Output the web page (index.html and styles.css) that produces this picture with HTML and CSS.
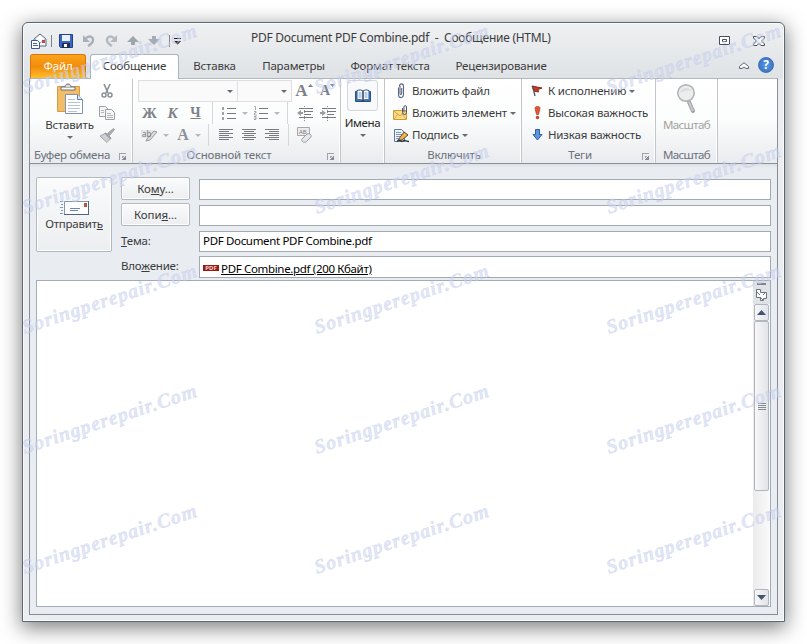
FILE: index.html
```html
<!DOCTYPE html>
<html lang="ru">
<head>
    <meta charset="UTF-8">
    <title>PDF Document PDF Combine.pdf - Сообщение (HTML)</title>
    <link rel="stylesheet" href="styles.css">
</head>
<body>
    <div class="window">
        <div class="titlebar">
            <div class="quick">
                <svg width="16" height="16" viewBox="0 0 16 16"><path d="M3 6l6-5 6 5v7H3z" fill="#fff" stroke="#52617c"/><path d="M4 6l5 4 6-4" fill="none" stroke="#9aa7bd"/><path d="M11 7h3v3h-3z" fill="#c4473a"/><path d="M.5 7.500h6l2 2v6h-8z" fill="#fff" stroke="#42578a"/><path d="M2 10.500h4M2 12.500h5" stroke="#3a65ae"/></svg>
                <i class="bar"></i>
                <svg width="16" height="16" viewBox="0 0 16 16"><path d="M1.500 1.500h13v13h-12l-1-1z" fill="#3c66c4" stroke="#25408d"/><path d="M4 2h8v6H4z" fill="#e8f1fb"/><path d="M4 10h8v5H4z" fill="#1f2e55"/><path d="M6 11h3v3H6z" fill="#fff"/></svg>
                <svg width="14" height="14" viewBox="0 0 14 14"><path d="M4 4c4-3 7-1 7 2s-2 4-5 6" fill="none" stroke="#a9afb6" stroke-width="2.400"/><path d="M1 1v7h7z" fill="#a9afb6"/></svg>
                <svg width="14" height="14" viewBox="0 0 14 14"><path d="M10 4C6 1 3 3 3 6s2 4 5 6" fill="none" stroke="#b4b9bf" stroke-width="2.400"/><path d="M13 1v7H6z" fill="#b4b9bf"/></svg>
                <svg width="12" height="10" viewBox="0 0 12 10"><path d="M6 0l6 6H8v3H4V6H0z" fill="#9fa5ac"/></svg>
                <svg width="12" height="10" viewBox="0 0 12 10"><path d="M6 9l6-6H8V0H4v3H0z" fill="#a6acb3"/></svg>
                <i class="bar"></i>
                <svg class="more" width="7" height="7" viewBox="0 0 7 7"><path d="M0 0h7v1H0zM0 3h7L3.500 6.500z" fill="#111"/></svg>
            </div>
            <div class="title">PDF Document PDF Combine.pdf&nbsp; -&nbsp; Сообщение (HTML)</div>
            <div class="controls">
                <svg width="11" height="9" viewBox="0 0 11 9"><path d="M.5.5h10v8H.5z" fill="#fff" stroke="#454e5a"/><path d="M3.500 3.500h4v2h-4z" fill="none" stroke="#454e5a"/></svg>
                <svg width="12" height="10" viewBox="0 0 12 10"><path d="M.5.500h3.500L6 2.700 8 .5h3.500v1.500L8.500 5l3 3v1.500H8L6 7.300 4 9.500H.5V8l3-3-3-3z" fill="#fff" stroke="#454e5a"/></svg>
            </div>
        </div>
        <div class="tabs">
            <div class="tab file">Файл</div>
            <div class="tab active">Сообщение</div>
            <div class="tab insert">Вставка</div>
            <div class="tab options">Параметры</div>
            <div class="tab format">Формат текста</div>
            <div class="tab review">Рецензирование</div>
            <svg class="collapse" width="10" height="8" viewBox="0 0 10 8"><path d="M.500 4.500L5 .7l4.500 3.800v2H7L5 5 3 6.500H.5z" fill="#fff" stroke="#59626d"/></svg>
            <div class="help">?</div>
        </div>
        <div class="ribbon">
            <div class="group clipboard">
                <div class="group-body">
                    <div class="big">
                        <svg width="28" height="32" viewBox="0 0 28 32"><path d="M1.500 3.500h22v25h-22z" fill="#f2bd67" stroke="#d89a43"/><path d="M5 4h14v3H5z" fill="#fff" stroke="#6b7077"/><path d="M9 4c0-4 6-4 6 0" fill="#ddd" stroke="#6b7077"/><path d="M9.500 11.500h12l5 5v14h-17z" fill="#fff" stroke="#7c93b3"/><path d="M21.500 11.500v5h5" fill="#d7e4f4" stroke="#5b7fb0"/><path d="M12 16.500h7M12 19.500h12M12 22.500h12M12 25.500h12M12 28.500h9" stroke="#b6c2d2"/></svg>
                        <span>Вставить</span>
                        <i class="arrow"></i>
                    </div>
                    <div class="stack">
                        <div class="line"><svg width="12" height="14" viewBox="0 0 12 14"><path d="M3 0l4 9M9 0L5 9" stroke="#8b9097" stroke-width="1.600"/><circle cx="3" cy="11" r="2" fill="none" stroke="#8b9097" stroke-width="1.500"/><circle cx="9" cy="11" r="2" fill="none" stroke="#8b9097" stroke-width="1.500"/></svg></div>
                        <div class="line"><svg width="16" height="14" viewBox="0 0 16 14"><path d="M.5.500h6l3 3v7h-9z" fill="#f5f5f5" stroke="#9da1a6"/><path d="M6.500 3.500h6l3 3v7h-9z" fill="#f5f5f5" stroke="#9da1a6"/><path d="M2 4.500h3M2 6.500h3M8 7.500h4M8 9.500h6M8 11.500h6" stroke="#b3b6ba"/></svg></div>
                        <div class="line"><svg width="16" height="15" viewBox="0 0 16 15"><path d="M14.500.5l1 1-5 6-2-2z" fill="#aaa" stroke="#a0a3a7"/><path d="M1 8l6-3 5 5-4 4.500z" fill="#cdcfd2" stroke="#a4a7ab"/><path d="M6 5l6 6" stroke="#9a9ea3" stroke-width="1.500"/></svg></div>
                    </div>
                </div>
                <div class="group-title">Буфер обмена <i class="launcher"></i></div>
            </div>
            <div class="group font">
                <div class="group-body">
                    <div class="line">
                        <div class="combo family"><i class="arrow"></i></div>
                        <div class="combo size"><i class="arrow"></i></div>
                        <div class="tool grow">А<svg width="5" height="3" viewBox="0 0 5 3"><path d="M0 3L2.500 0 5 3z" fill="#7d8187"/></svg></div>
                        <div class="tool shrink">А<svg width="5" height="3" viewBox="0 0 5 3"><path d="M0 0l2.500 3L5 0z" fill="#7d8187"/></svg></div>
                    </div>
                    <div class="line">
                        <div class="tool bold">Ж</div>
                        <div class="tool italic">К</div>
                        <div class="tool under">Ч</div>
                        <i class="sep"></i>
                        <div class="tool"><svg width="14" height="13" viewBox="0 0 14 13"><path d="M5 1.500h9M5 6.500h9M5 11.500h9" stroke="#777b80"/><path d="M0 0h2v3H0zM0 5h2v3H0zM0 10h2v3H0z" fill="#a0a3a8"/></svg></div>
                        <i class="drop"></i>
                        <div class="tool"><svg width="14" height="14" viewBox="0 0 14 14"><path d="M5 2.500h9M5 7.500h9M5 12.500h9" stroke="#777b80"/><path d="M0 .5h1.500V4M0 5.500h2v1.500H.500V9H3M0 10.500h2v3H0M0 12h2" fill="none" stroke="#94989d" stroke-width=".8"/></svg></div>
                        <i class="drop"></i>
                        <i class="sep wide"></i>
                        <div class="tool"><svg width="16" height="15" viewBox="0 0 16 15"><path d="M2 2.500h14M7 5.500h9M7 8.500h7M2 11.500h14" stroke="#777b80"/><path d="M7.500 0v15" stroke="#8c9095" stroke-dasharray="1 1"/><path d="M0 7l4-3v2h2v2H4v2z" fill="#999da3"/></svg></div>
                        <div class="tool"><svg width="16" height="15" viewBox="0 0 16 15"><path d="M2 2.500h14M7 5.500h9M7 8.500h7M2 11.500h14" stroke="#777b80"/><path d="M7.500 0v15" stroke="#8c9095" stroke-dasharray="1 1"/><path d="M6 7L2 4v2H0v2h2v2z" fill="#999da3"/></svg></div>
                    </div>
                    <div class="line">
                        <div class="tool"><svg width="17" height="13" viewBox="0 0 17 13"><path d="M0 1h12v8H0z" fill="#e4e5e7"/><path d="M6 10l7-8 3 1-7 8-4 1z" fill="#ddd" stroke="#999"/><text x="1" y="8" class="ab">ab</text></svg></div>
                        <i class="drop"></i>
                        <div class="tool color">А</div>
                        <i class="drop"></i>
                        <i class="sep wide"></i>
                        <div class="tool"><svg width="14" height="12" viewBox="0 0 14 12"><path d="M0 .5h14M0 2.500h10M0 4.500h14M0 6.500h10M0 8.500h14M0 10.500h10" stroke="#777b80"/></svg></div>
                        <div class="tool"><svg width="14" height="12" viewBox="0 0 14 12"><path d="M0 .5h14M2 2.500h10M0 4.500h14M2 6.500h10M0 8.500h14M2 10.500h10" stroke="#777b80"/></svg></div>
                        <div class="tool"><svg width="14" height="12" viewBox="0 0 14 12"><path d="M0 .5h14M4 2.500h10M0 4.500h14M4 6.500h10M0 8.500h14M4 10.500h10" stroke="#777b80"/></svg></div>
                        <i class="sep"></i>
                        <div class="tool"><svg width="16" height="16" viewBox="0 0 16 16"><path d="M.5.5h12v8H.5z" fill="#ececed" stroke="#a5a8ac"/><text x="2" y="7" class="ab small">AB</text><path d="M5 12l5-5c3-1 5 1 4 3l-5 5c-3 1-5-1-4-3z" fill="#e6e7e9" stroke="#9a9ea4"/></svg></div>
                    </div>
                </div>
                <div class="group-title">Основной текст <i class="launcher"></i></div>
            </div>
            <div class="group names">
                <div class="group-body">
                    <div class="big">
                        <div class="book"><svg width="16" height="14" viewBox="0 0 16 14"><path d="M.5 2.500h15v10H.5z" fill="#3f7fc4" stroke="#29527f"/><path d="M2 1.500c3-1 5-.5 6 .5 1-1 3-1.500 6-.5v9.500c-3-.8-5-.3-6 .7-1-1-3-1.500-6-.7z" fill="#fff" stroke="#33558a"/><path d="M8 2v10" stroke="#1d2f55" stroke-width="1.400"/><path d="M3.500 4h3M3.500 6h3M3.500 8h3M9.500 4h3M9.500 6h3M9.500 8h3" stroke="#6b9bd2"/></svg></div>
                        <span>Имена</span>
                        <i class="arrow"></i>
                    </div>
                </div>
            </div>
            <div class="group include">
                <div class="group-body">
                    <div class="line"><svg width="16" height="16" viewBox="0 0 16 16"><path d="M5.500 4.500v7a2 2.500 0 0 0 5 0v-8a1.500 2 0 0 0-4 0M7 3v7.500a.8.8 0 0 0 1.700 0V5" fill="none" stroke="#5c6880" stroke-width="1.100"/></svg><span>Вложить файл</span></div>
                    <div class="line"><svg width="16" height="16" viewBox="0 0 16 16"><path d="M.5 5.500h13v9H.5z" fill="#fbdc86" stroke="#d39a33"/><path d="M1 6l6 5 6-5M1 14l4-5M13 14L9 9" fill="none" stroke="#d9a544"/><path d="M9.500 3v4.500a2 2 0 0 0 4 0V2a1.300 1.300 0 0 0-2.600 0v5" fill="none" stroke="#4f5b73"/></svg><span>Вложить элемент</span><i class="arrow"></i></div>
                    <div class="line"><svg width="16" height="16" viewBox="0 0 16 16"><path d="M1.500 2.500h7l3 3v9h-10z" fill="#edf3fb" stroke="#66799b"/><path d="M3 5.500h5M3 7.500h6M3 9.500h4M3 11.500h3" stroke="#8296b8"/><path d="M5 13l6-8 4 3-6 5z" fill="#f0b44f" stroke="#5c4a32"/><path d="M4 14.500c3-3 4 1 6-.5s3 .5 6 .5" fill="none" stroke="#283244" stroke-width="1.300"/></svg><span>Подпись</span><i class="arrow"></i></div>
                </div>
                <div class="group-title">Включить</div>
            </div>
            <div class="group tags">
                <div class="group-body">
                    <div class="line"><svg width="12" height="14" viewBox="0 0 12 14"><path d="M1 2l10 2-4 1.500L7.500 8 3 7z" fill="#c63a26" stroke="#8d281c"/><path d="M1.500 2L4 12" stroke="#54545a" stroke-width="1.300"/></svg><span>К исполнению</span><i class="arrow"></i></div>
                    <div class="line"><svg width="12" height="14" viewBox="0 0 12 14"><path d="M4 2.500c0-3 5-3 5 0L7.500 8.500h-2z" fill="#e25635" stroke="#b23b22" stroke-width=".7"/><circle cx="6.500" cy="11.500" r="1.700" fill="#cc4226"/></svg><span>Высокая важность</span></div>
                    <div class="line"><svg width="12" height="14" viewBox="0 0 12 14"><path d="M4.500 1.500h4v5h2.500L6.500 12 2 6.500h2.500z" fill="#5b95dd" stroke="#2e5fa6"/></svg><span>Низкая важность</span></div>
                </div>
                <div class="group-title">Теги <i class="launcher"></i></div>
            </div>
            <div class="group zoom">
                <div class="group-body">
                    <div class="big disabled">
                        <svg width="22" height="32" viewBox="0 0 22 32"><path d="M13 19l4 9" stroke="#9c9ea1" stroke-width="4" stroke-linecap="round"/><path d="M13 19l4 9" stroke="#c9cacc" stroke-width="2"/><circle cx="10" cy="10" r="8.200" fill="#eceded" stroke="#b5b7ba" stroke-width="1.700"/><path d="M4 10c1-5 8-7 12-2-4-1-8 0-12 2z" fill="#dcdddf"/></svg>
                        <span>Масштаб</span>
                    </div>
                </div>
                <div class="group-title">Масштаб</div>
            </div>
        </div>
        <div class="compose">
            <div class="header">
                <button class="btn send">
                    <svg width="30" height="16" viewBox="0 0 30 16"><path d="M5.500 1.500h24v13h-24z" fill="#fdfdfe" stroke="#8796ad"/><path d="M5 14.500h25M29.500 1v14" stroke="#4d6482"/><path d="M25 3h3v4h-3z" fill="#b5533f"/><path d="M11 8.500h10M11 10.500h8" stroke="#6b88b5"/><path d="M1 1.500h3M2 4.500h2M1 7.500h3M2 10.500h2M1 13.500h3" stroke="#7f97bb"/></svg>
                    <span>Отправит<u>ь</u></span>
                </button>
                <div class="fields">
                    <button class="btn">Ко<u>м</u>у...</button>
                    <div class="field"></div>
                    <button class="btn">Копи<u>я</u>...</button>
                    <div class="field"></div>
                    <label><u>Т</u>ема:</label>
                    <div class="field">PDF Document PDF Combine.pdf</div>
                    <label class="attach-label">Вло<u>ж</u>ение:</label>
                    <div class="field attach"><b class="pdf">PDF</b><u>PDF Combine.pdf (200 Кбайт)</u></div>
                </div>
            </div>
            <div class="message">
                <div class="scrollbar">
                    <i class="split"></i>
                    <svg width="13" height="12" viewBox="0 0 13 12"><path d="M1.500.5h4v3h6v6h-3v2h-3v-3h-4z" fill="#fff" stroke="#6c737c"/><path d="M2 3l3 3M8 6l3-3M5 8l3 3" stroke="#6c737c"/></svg>
                    <div class="sbtn up"><svg width="9" height="5" viewBox="0 0 9 5"><path d="M0 5L4.500 0 9 5z" fill="#44546f"/></svg></div>
                    <div class="thumb"><i></i><i></i><i></i><i></i></div>
                    <div class="sbtn down"><svg width="9" height="5" viewBox="0 0 9 5"><path d="M0 0l4.500 5L9 0z" fill="#44546f"/></svg></div>
                </div>
            </div>
        </div>
    </div>
    <div class="marks">
        <span>Soringperepair.Com</span><span>Soringperepair.Com</span><span>Soringperepair.Com</span>
        <span>Soringperepair.Com</span><span>Soringperepair.Com</span><span>Soringperepair.Com</span>
        <span>Soringperepair.Com</span><span>Soringperepair.Com</span><span>Soringperepair.Com</span>
        <span>Soringperepair.Com</span><span>Soringperepair.Com</span><span>Soringperepair.Com</span>
        <span>Soringperepair.Com</span><span>Soringperepair.Com</span><span>Soringperepair.Com</span>
    </div>
</body>
</html>
```

FILE: styles.css
```css
* {
    box-sizing: border-box;
}
body {
    margin: 0;
    padding: 22px;
    width: 807px;
    height: 644px;
    overflow: hidden;
    position: relative;
    background: #fff;
    font-family: "Noto Sans", "Open Sans", sans-serif;
    font-size: 11.5px;
    letter-spacing: -0.18px;
    line-height: 16px;
    color: #3b3b3b;
}
svg {
    display: block;
    flex: none;
}
i {
    display: block;
    flex: none;
}
.window {
    width: 763px;
    height: 600px;
    padding: 0 6px;
    border: 1px solid #5d6770;
    border-radius: 6px 6px 0 0;
    background: #ebedf0;
    box-shadow: inset 0 0 0 1px #fafbfc, 0 5px 20px 1px rgba(0,0,0,0.5);
    background-image: linear-gradient(#eff0f2, #dfe3e6 54px, #ebedf0 58px);
}

/* title bar */
.titlebar {
    display: flex;
    align-items: center;
    height: 31px;
    padding-top: 5px;
}
.quick {
    display: flex;
    align-items: center;
    width: 222px;
    padding: 0 0 0 2px;
}
.quick svg {
    margin-right: 8px;
}
.quick svg:first-child {
    margin-right: 4px;
}
.quick .bar {
    width: 1px;
    height: 12px;
    margin-right: 6px;
    background: #7c838b;
}
.quick svg + svg + svg + svg {
    margin-left: 1px;
}
.quick svg + .bar:nth-last-child(2) {
    margin: 0 4px 0 1px;
}
.title {
    flex: 1;
    font-size: 12px;
    letter-spacing: -0.27px;
    margin-top: -7px;
}
.controls {
    display: flex;
    gap: 23px;
    padding: 0 13px 0 0;
}

/* tabs */
.tabs {
    display: flex;
    height: 24px;
    margin-left: 1px;
}
.tab {
    height: 24px;
    line-height: 23px;
    text-align: center;
}
.file {
    width: 56px;
    border: 1px solid #d9730e;
    border-bottom: 0;
    border-radius: 3px 3px 0 0;
    background: linear-gradient(#fba51b, #f28c0a 50%, #fcbf2c);
    color: #fff;
    line-height: 22px;
}
.active {
    width: 89px;
    margin: 0 1px 0 4px;
    height: 25px;
    border: 1px solid #adb3ba;
    border-bottom: 0;
    border-radius: 3px 3px 0 0;
    background: #fff;
    line-height: 21px;
    position: relative;
}
.insert {
    width: 69px;
}
.options {
    width: 89px;
}
.format {
    width: 104px;
}
.review {
    width: 118px;
}
.collapse {
    margin: 8px 9px 0 auto;
}
.help {
    width: 16px;
    height: 16px;
    margin: 3px 4px 0 0;
    border-radius: 50%;
    background: radial-gradient(#5a9be6, #3068bd);
    border: 1px solid #3e6fb4;
    color: #fff;
    font-weight: bold;
    font-size: 12px;
    line-height: 14px;
    text-align: center;
}

/* ribbon */
.ribbon {
    display: flex;
    height: 86px;
    border: 1px solid #8b9097;
    border-top-color: #b1b6bd;
    background: linear-gradient(#fff, #fbfcfc 50%, #e9ebee);
}
.group {
    display: flex;
    flex-direction: column;
    border-right: 1px solid #c2c6cb;
    box-shadow: inset -1px 0 #fff;
}
.group-body {
    height: 68px;
    padding-top: 1px;
}
.group-title {
    position: relative;
    height: 16px;
    line-height: 16px;
    text-align: center;
    color: #6a717b;
    white-space: nowrap;
}
.launcher {
    position: absolute;
    right: 6px;
    top: 6px;
    width: 7px;
    height: 7px;
    border: 1px solid #9da3aa;
    border-right: 0;
    border-bottom: 0;
}
.launcher::after {
    content: "";
    position: absolute;
    left: 2px;
    top: 2px;
    width: 4px;
    height: 4px;
    background: linear-gradient(135deg, #a0a5ab 35%, transparent 35%, transparent 50%, #878d95 50%);
}
.line {
    display: flex;
    align-items: center;
    height: 22px;
}
.arrow,
.drop::after {
    width: 0;
    height: 0;
    border: 3px solid transparent;
    border-top-color: #666b71;
    border-bottom: 0;
}
.big {
    display: flex;
    flex-direction: column;
    align-items: center;
}
.big .arrow {
    margin-top: 3px;
}
.clipboard {
    width: 103px;
}
.clipboard .group-body {
    display: flex;
}
.clipboard .big {
    width: 79px;
    padding-top: 3px;
    gap: 2px;
}
.clipboard .big .arrow {
    margin-top: 1px;
}
.clipboard .group-title {
    padding-right: 18px;
    letter-spacing: -0.3px;
}
.clipboard .stack {
    width: 16px;
    margin-left: -10px;
}
.clipboard .line {
    justify-content: center;
}
.font {
    width: 208px;
    padding-left: 5px;
}
.font .group-title {
    padding-right: 20px;
}
.combo {
    display: flex;
    align-items: center;
    justify-content: flex-end;
    height: 22px;
    border: 1px solid #dddfe3;
    background: #fafafb;
    padding-right: 4px;
}
.family {
    width: 100px;
}
.size {
    width: 55px;
    margin-left: -1px;
}
.tool {
    display: flex;
    align-items: center;
    justify-content: center;
    width: 23px;
    height: 22px;
    flex: none;
    font-family: "Liberation Serif", serif;
    font-weight: bold;
    font-size: 15px;
    letter-spacing: 0;
    color: #7d8187;
}
.italic {
    font-style: italic;
}
.under {
    text-decoration: underline;
    font-size: 14px;
}
.color {
    padding-left: 3px;
    color: #8d9299;
    font-size: 16px;
}
.grow {
    width: 24px;
    font-size: 17px;
}
.shrink {
    font-size: 14px;
}
.grow svg,
.shrink svg {
    margin-top: -12px;
}
.drop {
    display: flex;
    justify-content: center;
    width: 9px;
}
.drop::after {
    content: "";
    border-top-color: #b5b8bd;
}
.sep {
    width: 10px;
    height: 22px;
    background: linear-gradient(#d5d7db, #d5d7db) center / 1px 100% no-repeat;
}
.sep.wide {
    width: 12px;
}
.ab {
    font: 8px "Noto Sans", sans-serif;
    fill: #777b80;
}
.ab.small {
    font-size: 6px;
}
.names {
    width: 44px;
}
.book {
    display: flex;
    align-items: center;
    justify-content: center;
    width: 31px;
    height: 31px;
    border: 1px solid #d3d6db;
    border-radius: 3px;
    background: #f8f9fa;
}
.names .big {
    color: #262626;
    gap: 4px;
    letter-spacing: -0.4px;
}
.names .big .arrow {
    margin-top: -1px;
}
.include {
    width: 137px;
    padding-left: 8px;
}
.include .group-title {
    padding-right: 6px;
}
.include span,
.tags span {
    margin-left: 3px;
    white-space: nowrap;
}
.include .arrow,
.tags .arrow {
    margin-left: 3px;
}
.tags {
    width: 134px;
    padding-left: 9px;
}
.tags span {
    margin-left: 5px;
}
.tags .group-title {
    padding-right: 26px;
}
.zoom {
    width: 62px;
    letter-spacing: -0.6px;
}
.zoom .big {
    padding-top: 3px;
    gap: 2px;
}
.disabled {
    color: #a0a39c;
}

/* compose area */
.compose {
    height: 451px;
    padding: 13px 6px 0;
    border: 1px solid #858c95;
    border-top: 0;
    background: linear-gradient(#dde0e5, #e9ecf1 4px);
}
.header {
    display: flex;
    height: 103px;
}
.btn {
    padding: 0;
    font: inherit;
    letter-spacing: -0.1px;
    color: #3b3b3b;
    border: 1px solid #b3b8bf;
    border-radius: 2px;
    background: linear-gradient(#fbfbfc, #eceef0);
    box-shadow: inset 0 0 0 1px #fff;
}
.send {
    display: flex;
    flex-direction: column;
    align-items: center;
    justify-content: center;
    width: 76px;
    height: 75px;
    margin-right: 9px;
    letter-spacing: -0.22px;
}
.send svg {
    margin-top: 2px;
}
.fields {
    display: grid;
    grid-template-columns: 69px 572px;
    grid-template-rows: 23px 23px 23px 23px;
    gap: 3px 9px;
}
.fields label {
    line-height: 24px;
}
.fields .attach-label {
    line-height: 22px;
}
.field {
    height: 21px;
    margin-top: 2px;
    padding: 0 3px;
    border: 1px solid #a3a9b1;
    background: #fff;
    color: #000;
    line-height: 18px;
    letter-spacing: -0.33px;
}
.attach {
    display: flex;
    height: 22px;
    margin-top: 1px;
    line-height: 24px;
}
.pdf {
    width: 16px;
    height: 6px;
    margin: 8px 2px 0 0;
    background: #941c14;
    color: #f6d0cb;
    font-size: 6px;
    line-height: 6px;
    letter-spacing: 0;
    text-align: center;
}
.message {
    display: flex;
    justify-content: flex-end;
    height: 327px;
    border: 1px solid #a3abb8;
    background: #fff;
}
.scrollbar {
    display: flex;
    flex-direction: column;
    align-items: center;
    width: 17px;
    background: linear-gradient(#dfe2e6 23px, transparent 23px), linear-gradient(90deg, #ebebed, #fafafa);
}
.split {
    width: 9px;
    height: 2px;
    margin: 2px 0 4px;
    background: #7d838a;
}
.sbtn,
.thumb {
    display: flex;
    align-items: center;
    justify-content: center;
    width: 15px;
    border: 1px solid #b2b7bd;
    border-radius: 2px;
    background: linear-gradient(90deg, #f7f7f8, #e2e4e8);
}
.sbtn {
    height: 17px;
}
.up {
    margin-top: 3px;
}
.down {
    margin-top: auto;
}
.thumb {
    flex-direction: column;
    gap: 1px;
    height: 170px;
}
.thumb i {
    width: 8px;
    height: 1px;
    background: #858b93;
}

/* watermark */
.marks {
    position: absolute;
    left: 25px;
    top: 75px;
    display: grid;
    grid-template-columns: 292px 292px 182px;
    grid-auto-rows: 120px;
    pointer-events: none;
}
.marks span {
    width: 182px;
    height: 24px;
    font: italic bold 20px/24px "Liberation Serif", serif;
    letter-spacing: 0.9px;
    white-space: nowrap;
    color: rgba(205,213,240,0.6);
    -webkit-text-stroke: 0.4px rgba(160,172,220,0.35);
    transform: rotate(-18.4deg);
    transform-origin: 0 20px;
}
```
